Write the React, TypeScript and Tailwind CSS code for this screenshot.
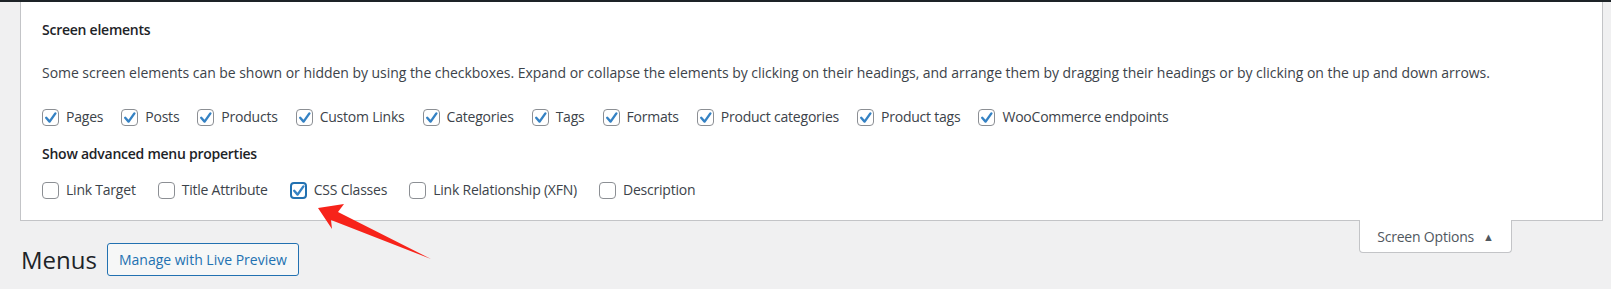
import React from "react";

const FONT = { fontFamily: '"Open Sans", "Noto Sans", sans-serif' };

function Box({ checked, focus }: { checked?: boolean; focus?: boolean }) {
  return (
    <span
      className={
        "relative flex h-[17px] w-[17px] shrink-0 items-center justify-center rounded-[4px] bg-white " +
        (focus ? "border-2 border-[#2271b1]" : "border border-[#8c8f94]")
      }
    >
      {checked && (
        <svg width="17" height="17" viewBox="0 0 17 17" className="absolute left-[-1px] top-[-1px]" style={focus ? { left: -2, top: -2 } : undefined}>
          <path d="M4.2 8.8 L7.6 12.6 L13.4 4.4" fill="none" stroke="#3582c4" strokeWidth="2.4" strokeLinecap="round" strokeLinejoin="round" />
        </svg>
      )}
    </span>
  );
}

function Item({ label, checked, focus }: { label: string; checked?: boolean; focus?: boolean }) {
  return (
    <label className="flex items-center gap-[7px] text-[14px] leading-[20px] tracking-[-0.22px] text-[#3c434a]">
      <Box checked={checked} focus={focus} />
      <span>{label}</span>
    </label>
  );
}

export default function App() {
  const row1 = [
    "Pages",
    "Posts",
    "Products",
    "Custom Links",
    "Categories",
    "Tags",
    "Formats",
    "Product categories",
    "Product tags",
    "WooCommerce endpoints",
  ];
  return (
    <div className="relative h-[289px] w-full overflow-hidden bg-[#f0f0f1]" style={FONT}>
      <div className="h-[2px] bg-[#1d2327]" />
      <div className="ml-[20px] mr-[8px] border-x border-b border-[#c3c4c7] bg-white pl-[21px] pt-[18px] pb-[20px]">
        <h2 className="text-[14px] font-semibold leading-[20px] tracking-[-0.25px] text-[#1d2327]">Screen elements</h2>
        <p className="mt-[23px] text-[14px] leading-[20px] tracking-[-0.04px] text-[#3c434a]">
          Some screen elements can be shown or hidden by using the checkboxes. Expand or collapse the elements by clicking on their headings, and arrange them by dragging their headings or by clicking on the up and down arrows.
        </p>
        <div className="mt-[24px] flex items-center gap-x-[18px]">
          {row1.map((l) => (
            <Item key={l} label={l} checked />
          ))}
        </div>
        <h3 className="mt-[17px] text-[14px] font-semibold leading-[20px] tracking-[-0.25px] text-[#1d2327]">Show advanced menu properties</h3>
        <div className="mt-[16px] flex items-center gap-x-[22px]">
          <Item label="Link Target" />
          <Item label="Title Attribute" />
          <Item label="CSS Classes" checked focus />
          <Item label="Link Relationship (XFN)" />
          <Item label="Description" />
        </div>
      </div>
      <div>
        <div className="float-right mr-[99px] mt-[-1px] flex h-[33px] w-[153px] items-center justify-center gap-[9px] rounded-b-[4px] border-x border-b border-[#c3c4c7] bg-white text-[14px] tracking-[-0.2px] text-[#50575e]">
          <span>Screen Options</span>
          <span className="text-[11px] leading-none text-[#50575e]">▲</span>
        </div>
        <div className="flex items-center pt-[22px] pl-[21px]">
          <h1 className="text-[24px] font-normal leading-[29px] text-[#1d2327]">Menus</h1>
          <button className="ml-[10px] h-[33px] w-[192px] rounded-[3px] border border-[#2271b1] bg-[#f6f7f7] text-[14px] text-[#2271b1]">
            Manage with Live Preview
          </button>
        </div>
      </div>
      <svg className="pointer-events-none absolute left-0 top-0" width="1611" height="289">
        <polygon points="318,208 344,204 338,212 431,259 331,220 332,229" fill="#f7231a" />
      </svg>
    </div>
  );
}
